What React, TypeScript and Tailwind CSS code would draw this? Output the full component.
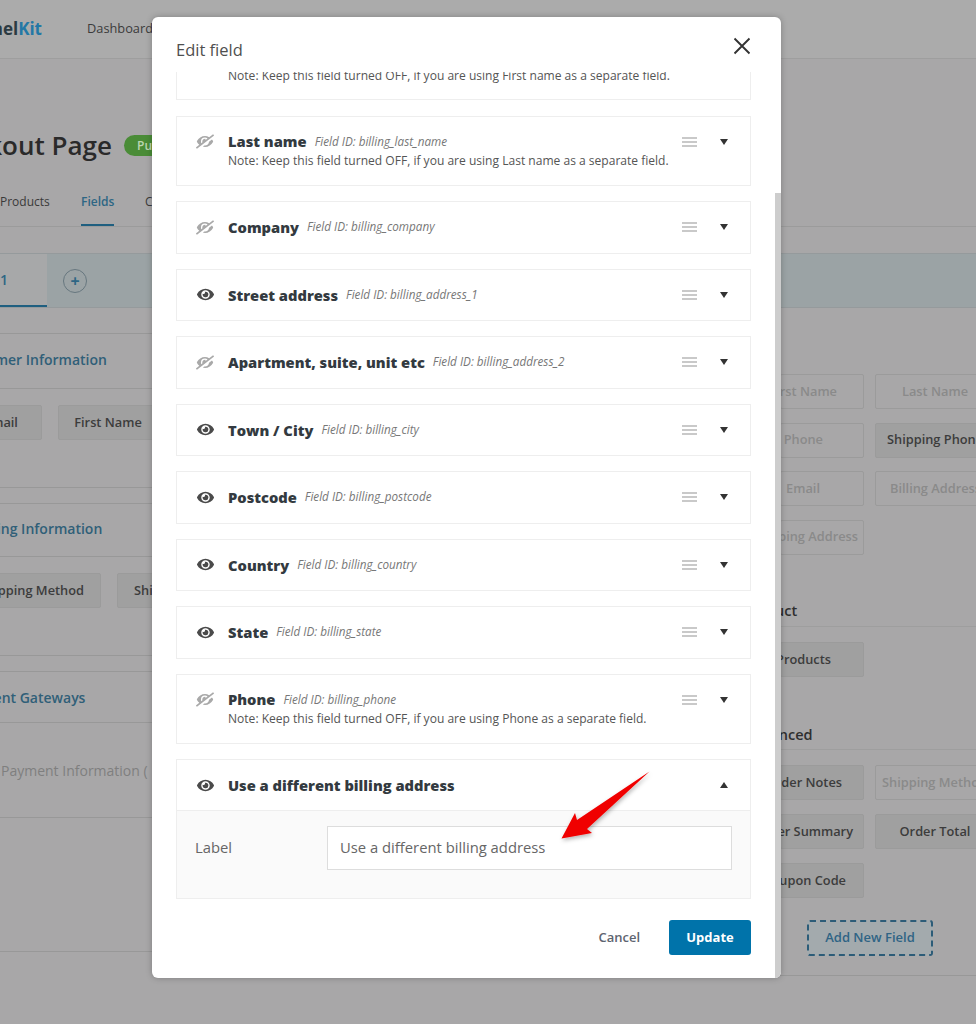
import { FaEye, FaEyeSlash } from 'react-icons/fa';

// ── Background page (sits under the dimming) ──────────────────────────────────

function Chip({ label, muted, className = '' }: { label: string; muted?: boolean; className?: string }) {
  return (
    <div
      className={`h-[35px] flex items-center justify-center rounded-[2px] border border-[#9b9b9b] text-[12.8px] font-semibold whitespace-nowrap overflow-hidden ${
        muted ? 'text-[#8a8a8a]' : 'bg-[#a0a0a0] text-[#3c3c3c]'
      } ${className}`}
    >
      {label}
    </div>
  );
}

function LeftColumn() {
  return (
    <div className="w-[152px] flex-none overflow-hidden pt-[25px]">
      <div className="border-t border-[#989898] h-[55px] pb-[4px] flex items-center -ml-[44px] whitespace-nowrap text-[14px] font-semibold text-[#305f78]">
        Customer Information
      </div>
      <div className="border-y border-[#989898] h-[100px] pt-4 flex gap-4 -ml-[40px]">
        <Chip label="Email" className="w-[82px] flex-none" />
        <Chip label="First Name" className="w-[100px] flex-none" />
      </div>
      <div className="border-t border-[#989898] mt-[15px] h-[53px] pb-[4px] flex items-center -ml-[41px] whitespace-nowrap text-[14px] font-semibold text-[#305f78]">
        Shipping Information
      </div>
      <div className="border-y border-[#989898] h-[100px] pt-4 flex gap-4 -ml-[32px]">
        <Chip label="Shipping Method" className="w-[133px] flex-none justify-end pr-[16px]" />
        <Chip label="Shipping" className="w-[90px] flex-none justify-start pl-4" />
      </div>
      <div className="border-t border-[#989898] mt-[15px] h-[51px] flex items-center -ml-[44px] whitespace-nowrap text-[14px] font-semibold text-[#305f78]">
        Payment Gateways
      </div>
      <div className="border-t border-[#989898] h-[95px] flex items-center whitespace-nowrap text-[14px] font-normal text-[#7f7f7f]">
        <span className="ml-px">Payment Information (</span>
      </div>
      <div className="border-t border-[#989898] h-[134px]" />
      <div className="border-t border-[#989898]" />
    </div>
  );
}

function RightColumn() {
  return (
    <div className="flex-1 min-w-0 overflow-hidden ml-[628px] pt-[66px]">
      <div className="grid grid-cols-[84px_120px] gap-x-[11px] gap-y-[13.5px]">
        <Chip label="First Name" muted className="justify-end pr-[26px]" />
        <Chip label="Last Name" muted />
        <Chip label="Phone" muted className="justify-end pr-[40px]" />
        <Chip label="Shipping Phone" className="justify-start pl-[11px]" />
        <Chip label="Email" muted className="justify-end pr-[43px]" />
        <Chip label="Billing Address" muted className="justify-start pl-[14px]" />
        <Chip label="Shipping Address" muted className="justify-end pr-[5px]" />
      </div>
      <div className="mt-[48.5px] -ml-[38px] text-[14.5px] font-semibold text-[#2f2f2f] h-[15px] leading-[15px]">Product</div>
      <div className="border-t border-[#9e9e9e] mt-[8px] pt-[15px]">
        <Chip label="Products" className="w-[84px] justify-end pr-[32px]" />
      </div>
      <div className="mt-[50px] -ml-[36px] text-[14.5px] font-semibold text-[#2f2f2f] h-[15px] leading-[15px]">Advanced</div>
      <div className="border-t border-[#9e9e9e] mt-[7px] pt-[15px] grid grid-cols-[84px_120px] gap-x-[11px] gap-y-[14px]">
        <Chip label="Order Notes" className="justify-end pr-[21px]" />
        <Chip label="Shipping Method" muted className="justify-start pl-[6px]" />
        <Chip label="Order Summary" className="justify-end pr-[10px]" />
        <Chip label="Order Total" />
        <Chip label="Coupon Code" className="justify-end pr-[17px]" />
      </div>
      <div className="mt-[22px] ml-[27px] w-[126px] h-[36px] flex items-center justify-center rounded-[3px] border-2 border-dashed border-[#2c5c78] bg-[#a3aaad] text-[13px] font-semibold text-[#2f6485]">
        Add New Field
      </div>
      <div className="border-t border-[#989898] mt-[19px]" />
    </div>
  );
}

function BackgroundPage() {
  return (
    <div className="h-full flex flex-col bg-[#a8a7a8]">
      <header className="h-[59px] flex-none flex items-center border-b border-[#9e9e9e] bg-[#ababab]">
        <span className="w-[87px] flex-none -mt-[1px]">
          <span className="w-[42px] flex justify-end overflow-hidden whitespace-nowrap text-[17px] font-bold text-[#2b3a42]">
            <span className="flex-none">Funnel<span className="text-[#2378a6]">Kit</span></span>
          </span>
        </span>
        <span className="text-[12.8px] text-[#3b3b3b] font-medium -mt-[1px]">Dashboard</span>
      </header>
      <div className="h-[168px] flex-none flex flex-col justify-end">
        <div className="flex items-center gap-[12px] mb-[31px]">
          <div className="w-[112px] flex justify-end overflow-hidden whitespace-nowrap">
            <h1 className="flex-none text-[26px] leading-[36px] font-semibold text-[#2a2a2a]">Checkout Page</h1>
          </div>
          <span className="h-[21px] w-[60px] rounded-full bg-[#4a8c37] text-[12px] leading-[21px] text-[#bcd6b2] font-semibold pl-[13px]">
            Pu
          </span>
        </div>
        <nav className="flex items-start gap-[31px] h-[33px] text-[12px] border-b border-[#9b9b9b] whitespace-nowrap font-medium">
          <span className="text-[#3a3a3a] mt-[-1px] w-[50px]">Products</span>
          <span className="text-[#2d6684] font-semibold mt-[-1px] h-[33px] border-b-2 border-[#1f5f80] w-[33px]">Fields</span>
          <span className="text-[#3a3a3a] mt-[-1px]">C</span>
        </nav>
      </div>
      <div className="h-[55px] mt-[26px] flex-none flex bg-[#9ba3a5] border-y border-[#959a9c]">
        <div className="w-[47px] flex items-center bg-[#a7a8a9] border-b-2 border-[#1f5f80] text-[14px] font-semibold text-[#2d6684]">
          1
        </div>
        <div className="ml-[16px] mt-[15px] w-[24px] h-[24px] rounded-full border border-[#67777f] text-[#2d6684] flex items-center justify-center text-[16px] font-bold leading-none">
          +
        </div>
      </div>
      <div className="flex-1 flex min-h-0 font-semibold">
        <LeftColumn />
        <RightColumn />
      </div>
    </div>
  );
}

// ── Modal ─────────────────────────────────────────────────────────────────────

interface FieldRow {
  name: string;
  id: string;
  hidden?: boolean;
  note?: string;
}

const FIELDS: FieldRow[] = [
  { name: 'Last name', id: 'billing_last_name', hidden: true, note: 'Last name' },
  { name: 'Company', id: 'billing_company', hidden: true },
  { name: 'Street address', id: 'billing_address_1' },
  { name: 'Apartment, suite, unit etc', id: 'billing_address_2', hidden: true },
  { name: 'Town / City', id: 'billing_city' },
  { name: 'Postcode', id: 'billing_postcode' },
  { name: 'Country', id: 'billing_country' },
  { name: 'State', id: 'billing_state' },
  { name: 'Phone', id: 'billing_phone', hidden: true, note: 'Phone' },
];

function EyeIcon({ hidden }: { hidden?: boolean }) {
  return (
    <span className="w-[18px] flex-none flex justify-center">
      {hidden ? (
        <FaEyeSlash className="w-[18px] h-[15px] text-[#a9a9a9] -scale-x-100" />
      ) : (
        <FaEye className="w-[17px] h-[17px] text-[#4a4a4a]" />
      )}
    </span>
  );
}

function Handle() {
  return (
    <span className="flex flex-col gap-[2px] w-[15px] flex-none">
      <span className="h-[2px] bg-[#c9c9c9]" />
      <span className="h-[2px] bg-[#c9c9c9]" />
      <span className="h-[2px] bg-[#c9c9c9]" />
    </span>
  );
}

function Caret({ up }: { up?: boolean }) {
  return (
    <span
      className={`w-0 h-0 border-x-[4px] border-x-transparent flex-none ${
        up ? 'border-b-[6px] border-b-[#333]' : 'border-t-[6px] border-t-[#333]'
      }`}
    />
  );
}

function Row({ field }: { field: FieldRow }) {
  return (
    <div
      className={`border border-[#eeeeee] bg-white mb-[15px] flex flex-col pl-[19px] ${
        field.note ? 'h-[70.5px] pt-[15px]' : 'h-[52.5px] justify-center'
      }`}
    >
      <div className="flex items-center h-[20px]">
        <EyeIcon hidden={field.hidden} />
        <span className="ml-[14px] text-[14.7px] font-extrabold text-[#333a40] whitespace-nowrap">{field.name}</span>
        <span className="ml-[8px] text-[11.7px] italic text-[#777] whitespace-nowrap">Field ID: {field.id}</span>
        <span className="ml-auto flex items-center gap-[23px] pr-[22px]">
          <Handle />
          <Caret />
        </span>
      </div>
      {field.note && (
        <p className="ml-[32px] text-[12.05px] leading-[17px] text-[#555] whitespace-nowrap">
          Note: Keep this field turned OFF, if you are using {field.note} as a separate field.
        </p>
      )}
    </div>
  );
}

function EditFieldModal() {
  return (
    <div className="absolute left-[152px] top-[17px] w-[629px] h-[961px] bg-white rounded-[6px] shadow-[0_0_6px_rgba(0,0,0,0.25)] overflow-hidden flex flex-col">
      {/* scrollbar thumb */}
      <div className="absolute right-0 top-[176px] bottom-0 w-[6px] bg-[#cdcdcd]" />

      <div className="h-[55px] flex-none flex items-start justify-between pl-[24px] pr-[30px] pt-[22px]">
        <h2 className="text-[16.5px] leading-[22px] text-[#4f4f4f]">Edit field</h2>
        <svg viewBox="0 0 18 18" className="w-[18px] h-[18px] -mt-[2px] text-[#333]" fill="none" stroke="currentColor" strokeWidth="1.9">
          <path d="M1.5 1.5 16.5 16.5M16.5 1.5 1.5 16.5" />
        </svg>
      </div>

      <div className="pl-[24px] pr-[30px] flex-1 min-h-0 overflow-hidden">
        {/* first row is scrolled almost out of view */}
        <div className="h-[28px] overflow-hidden mb-[15.5px] border border-t-0 border-[#eeeeee] pl-[51px]">
          <p className="-mt-[5px] text-[12.05px] leading-[17px] text-[#555] whitespace-nowrap">
            Note: Keep this field turned OFF, if you are using First name as a separate field.
          </p>
        </div>

        {FIELDS.map((f) => (
          <Row key={f.id} field={f} />
        ))}

        <div className="border border-[#eeeeee] h-[140px] flex flex-col">
          <div className="h-[51px] flex-none flex items-center pl-[19px] border-b border-[#eeeeee]">
            <EyeIcon />
            <span className="ml-[14px] text-[14.7px] font-extrabold text-[#333a40] whitespace-nowrap">Use a different billing address</span>
            <span className="ml-auto pr-[22px] flex">
              <Caret up />
            </span>
          </div>
          <div className="flex-1 bg-[#fafafa] flex items-start pl-[18px] pr-[18px] pt-[15px]">
            <label className="w-[132px] flex-none h-[43px] flex items-center text-[14.8px] text-[#666]">Label</label>
            <div className="flex-1 h-[44px] border border-[#dddddd] bg-white flex items-center pl-[12px] pb-[1px] text-[14.8px] text-[#666]">
              Use a different billing address
            </div>
          </div>
        </div>

        <div className="mt-[21px] flex items-center justify-end">
          <span className="text-[13px] font-semibold text-[#5d6470] mr-[29px] mt-[1px]">Cancel</span>
          <span className="w-[82px] h-[35px] rounded-[3px] bg-[#0073aa] text-white text-[13px] font-bold flex items-center justify-center pt-[1px]">
            Update
          </span>
        </div>
      </div>
    </div>
  );
}

export default function App() {
  return (
    <div className="relative w-[976px] h-[1024px] overflow-hidden font-['Open_Sans',sans-serif]">
      <BackgroundPage />
      <EditFieldModal />
      {/* annotation arrow drawn over the screenshot */}
      <svg className="absolute left-0 top-0 w-[976px] h-[1024px] pointer-events-none" viewBox="0 0 976 1024">
        <defs>
          <filter id="arrow-shadow" x="-20%" y="-20%" width="150%" height="150%">
            <feDropShadow dx="1" dy="2" stdDeviation="2" floodColor="#000" floodOpacity="0.3" />
          </filter>
        </defs>
        <path d="M561.5 838.5 575 813 577 820 649.5 771.5 587 829 592 833Z" fill="#f00000" filter="url(#arrow-shadow)" />
      </svg>
    </div>
  );
}
